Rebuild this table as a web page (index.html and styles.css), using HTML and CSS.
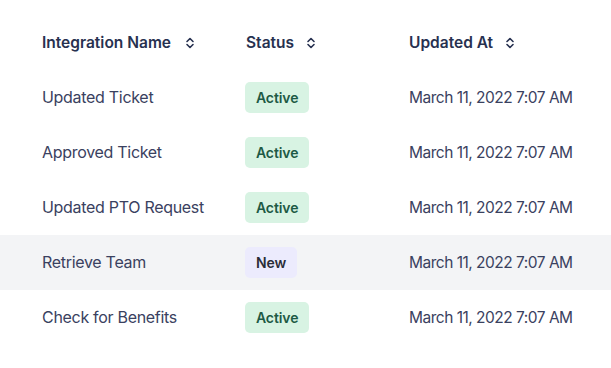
FILE: index.html
```html
<!DOCTYPE html>
<html>
<head>
<meta charset="utf-8">
<link rel="stylesheet" href="styles.css">
</head>
<body>
<div class="table">
  <div class="row head">
    <div class="cell">Integration Name <svg class="sort s1" viewBox="0 0 10 14"><path d="M2 5.5 L5 2.5 L8 5.5 M2 8.5 L5 11.5 L8 8.5"/></svg></div>
    <div class="cell">Status <svg class="sort" viewBox="0 0 10 14"><path d="M2 5.5 L5 2.5 L8 5.5 M2 8.5 L5 11.5 L8 8.5"/></svg></div>
    <div class="cell">Updated At <svg class="sort" viewBox="0 0 10 14"><path d="M2 5.5 L5 2.5 L8 5.5 M2 8.5 L5 11.5 L8 8.5"/></svg></div>
  </div>
  <div class="row">
    <div class="cell">Updated Ticket</div>
    <div class="cell"><span class="badge active">Active</span></div>
    <div class="cell date">March 11, 2022 7:07 AM</div>
  </div>
  <div class="row">
    <div class="cell">Approved Ticket</div>
    <div class="cell"><span class="badge active">Active</span></div>
    <div class="cell date">March 11, 2022 7:07 AM</div>
  </div>
  <div class="row">
    <div class="cell">Updated PTO Request</div>
    <div class="cell"><span class="badge active">Active</span></div>
    <div class="cell date">March 11, 2022 7:07 AM</div>
  </div>
  <div class="row hl">
    <div class="cell">Retrieve Team</div>
    <div class="cell"><span class="badge new">New</span></div>
    <div class="cell date">March 11, 2022 7:07 AM</div>
  </div>
  <div class="row">
    <div class="cell">Check for Benefits</div>
    <div class="cell"><span class="badge active">Active</span></div>
    <div class="cell date">March 11, 2022 7:07 AM</div>
  </div>
</div>
</body>
</html>
```
FILE: styles.css
```css
html, body {
  margin: 0;
  padding: 0;
  background: #ffffff;
}
body {
  font-family: Inter, "Noto Sans", sans-serif;
  color: #3a4160;
}
.table {
  padding-top: 16px;
}
.row {
  display: grid;
  grid-template-columns: 204px 163px 1fr;
  padding-left: 42px;
  height: 55px;
  align-items: center;
  font-size: 16px;
  letter-spacing: -0.3px;
}
.row.head {
  height: 54px;
  font-size: 15.5px;
  font-weight: 600;
  color: #273150;
  letter-spacing: 0;
}
.row.hl {
  background: #f3f4f6;
}
.cell {
  display: flex;
  align-items: center;
  white-space: nowrap;
  padding-bottom: 1px;
}
.date {
  font-size: 15.5px;
  letter-spacing: -0.5px;
}
.sort {
  width: 10px;
  height: 14px;
  margin-left: 12px;
  fill: none;
  stroke: #273150;
  stroke-width: 1.6;
  stroke-linecap: round;
  stroke-linejoin: round;
}
.sort.s1 {
  margin-left: 14px;
}
.badge {
  display: inline-flex;
  align-items: center;
  height: 31px;
  padding: 0 11px;
  margin-left: -1px;
  border-radius: 5px;
  font-size: 14px;
  font-weight: 600;
  letter-spacing: -0.1px;
}
.badge.active {
  background: #d8f3e3;
  color: #1d5a45;
}
.badge.new {
  background: #ecebfd;
  color: #2a2d38;
}
```
